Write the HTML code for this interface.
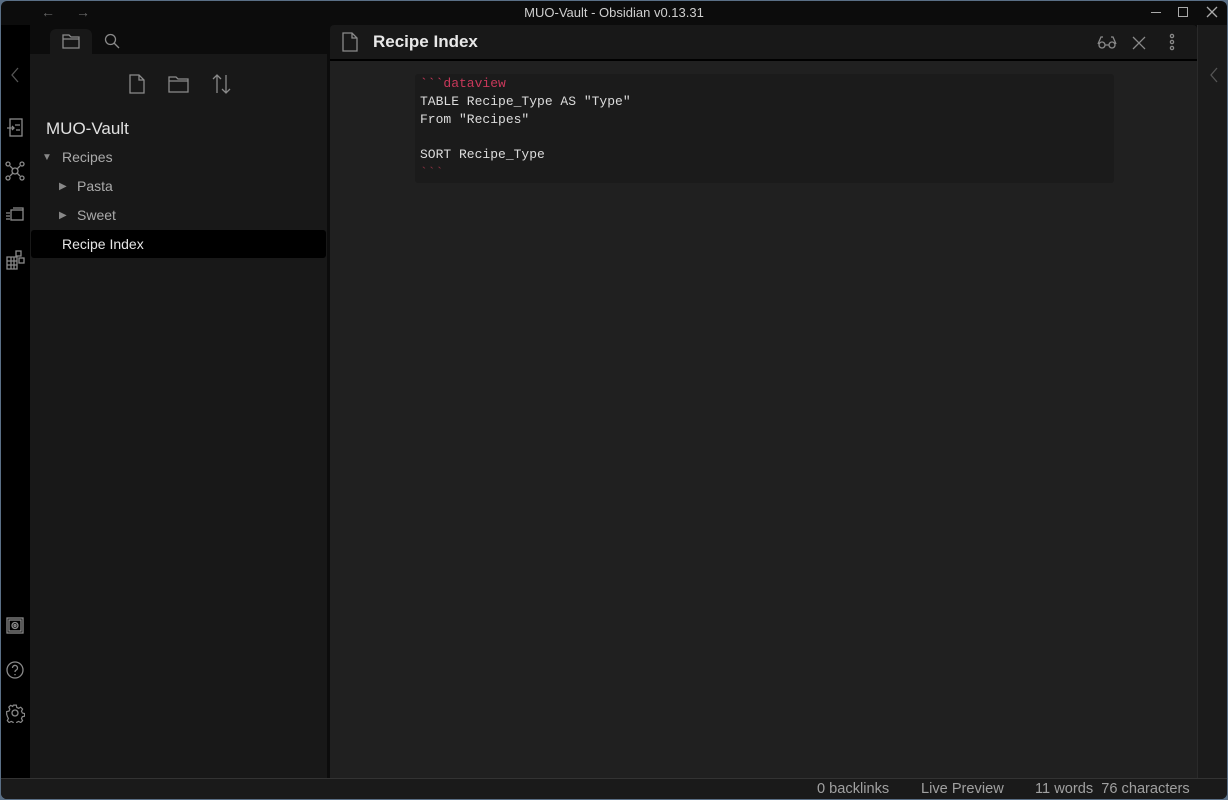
<!DOCTYPE html>
<html><head><meta charset="utf-8"><style>
*{margin:0;padding:0;box-sizing:border-box}
body{width:1228px;height:800px;background:#5a6f86;font-family:"Liberation Sans",sans-serif;overflow:hidden;position:relative}
.win{position:absolute;left:1px;top:1px;right:1px;bottom:1px;background:#0c0c0c;border-radius:6px;overflow:hidden}
.abs{position:absolute}
.title{left:0;right:0;top:0;height:24px;text-align:center;color:#cfcfcf;font-size:13px;line-height:24px}
svg{position:absolute;fill:none;stroke:#8a8a8a;stroke-width:1.3}
.mono{font-family:"Liberation Mono",monospace;font-size:13px;color:#dcdcdc;line-height:17.8px;white-space:pre}
.st{color:#a0a0a0;font-size:14.6px;top:780px}
</style></head><body><div class="win">
<div class="abs title">MUO-Vault - Obsidian v0.13.31</div>
<div class="abs" style="left:40px;top:3px;color:#666;font-size:14px">←</div>
<div class="abs" style="left:75px;top:3px;color:#666;font-size:14px">→</div>
<div class="abs" style="left:1150px;top:11px;width:10px;height:1px;background:#aaa"></div>
<div class="abs" style="left:1177px;top:6px;width:10px;height:10px;border:1px solid #aaa"></div>
<svg style="left:1205px;top:5px" width="12" height="12"><path d="M1 1L11 11M11 1L1 11" stroke="#aaa"/></svg>
<div class="abs" style="left:0;top:24px;width:29px;height:753px;background:#000"></div>
<svg style="left:8px;top:66px" width="12" height="16"><path d="M9 1L3 8L9 15" stroke="#555"/></svg>
<svg style="left:5px;top:117px" width="18" height="20"><rect x="4" y="1" width="12" height="17"/><path d="M1 10h7M6 8l2 2l-2 2M9 7h5M10 12h4"/></svg>
<svg style="left:4px;top:160px" width="20" height="20"><circle cx="10" cy="10" r="3"/><circle cx="3" cy="3" r="2"/><circle cx="17" cy="3" r="2"/><circle cx="3" cy="17" r="2"/><circle cx="17" cy="17" r="2"/><path d="M5 5l3 3M15 5l-3 3M5 15l3-3M15 15l-3-3"/></svg>
<svg style="left:4px;top:205px" width="20" height="18"><rect x="6" y="4" width="12" height="10"/><path d="M8 2h10v2M1 7h4M1 10h4M1 13h4"/></svg>
<svg style="left:4px;top:248px" width="20" height="22"><path d="M2 8h10v12H2zM2 12h10M2 16h10M6 8v12M9 8v12"/><rect x="11" y="2" width="5" height="5"/><rect x="14" y="9" width="5" height="5"/></svg>
<svg style="left:5px;top:616px" width="18" height="18"><rect x="1" y="1" width="16" height="15"/><rect x="3" y="3" width="12" height="11"/><circle cx="9" cy="8.5" r="3"/><circle cx="9" cy="8.5" r="1"/></svg>
<svg style="left:5px;top:660px" width="18" height="18"><circle cx="9" cy="9" r="8"/><path d="M6.5 7a2.5 2.5 0 1 1 3.5 2.2c-.8.4-1 .9-1 1.8M9 13v1.2"/></svg>
<svg style="left:4px;top:702px" width="20" height="20"><circle cx="10" cy="10" r="3"/><path d="M8.5 1.5h3l.5 2.5 2 1 2.3-1.2 2 2-1.2 2.3 1 2 2.4.5v3l-2.4.5-1 2 1.2 2.3-2 2-2.3-1.2-2 1-.5 2.4h-3l-.5-2.4-2-1-2.3 1.2-2-2 1.2-2.3-1-2L1 11.5v-3l2.5-.5 1-2L3.3 3.7l2-2L7.6 2.9l.4-1z" transform="scale(.92) translate(.8 .8)"/></svg>
<div class="abs" style="left:29px;top:53px;width:297px;height:724px;background:#181818"></div>
<div class="abs" style="left:49px;top:28px;width:42px;height:27px;background:#181818;border-radius:6px 6px 0 0"></div>
<svg style="left:61px;top:32px" width="20" height="16"><path d="M1 2h6l2 2h8v11H1zM1 6h16"/></svg>
<svg style="left:103px;top:32px" width="16" height="16"><circle cx="6.5" cy="6.5" r="5"/><path d="M10 10l5 5"/></svg>
<svg style="left:127px;top:73px" width="18" height="20"><path d="M2 1h9l5 5v13H2zM11 1v5h5"/></svg>
<svg style="left:167px;top:74px" width="22" height="18"><path d="M1 2h7l2 2h10v13H1zM1 6h19"/></svg>
<svg style="left:210px;top:73px" width="22" height="20"><path d="M6 19V1M2 5l4-4 4 4M15 1v18M11 15l4 4 4-4"/></svg>
<div class="abs" style="left:45px;top:118px;color:#e0e0e0;font-size:17px">MUO-Vault</div>
<div class="abs" style="left:41px;top:151px;color:#888;font-size:10px">▼</div>
<div class="abs" style="left:61px;top:148px;color:#aaa;font-size:14px">Recipes</div>
<div class="abs" style="left:58px;top:180px;color:#888;font-size:10px">▶</div>
<div class="abs" style="left:76px;top:177px;color:#aaa;font-size:14px">Pasta</div>
<div class="abs" style="left:58px;top:209px;color:#888;font-size:10px">▶</div>
<div class="abs" style="left:76px;top:206px;color:#aaa;font-size:14px">Sweet</div>
<div class="abs" style="left:30px;top:229px;width:295px;height:28px;background:#000;border-radius:3px"></div>
<div class="abs" style="left:61px;top:235px;color:#e6e6e6;font-size:14px">Recipe Index</div>
<div class="abs" style="left:329px;top:24px;width:867px;height:34px;background:#181818;border-radius:4px 4px 0 0"></div>
<div class="abs" style="left:329px;top:58px;width:867px;height:2px;background:#000"></div>
<div class="abs" style="left:329px;top:60px;width:867px;height:717px;background:#202020"></div>
<svg style="left:341px;top:31px" width="16" height="20"><path d="M1 1h9l5 5v13H1zM10 1v5h5"/></svg>
<div class="abs" style="left:372px;top:31px;color:#e8e8e8;font-size:17px;font-weight:bold">Recipe Index</div>
<svg style="left:1096px;top:34px" width="20" height="14"><path d="M1 9l3-7h2M19 9l-3-7h-2"/><circle cx="5" cy="10" r="3"/><circle cx="15" cy="10" r="3"/><path d="M8 10h4"/></svg>
<svg style="left:1131px;top:35px" width="14" height="14"><path d="M1 1l12 12M13 1L1 13"/></svg>
<svg style="left:1167px;top:32px" width="8" height="18"><circle cx="4" cy="3" r="1.6"/><circle cx="4" cy="9" r="1.6"/><circle cx="4" cy="15" r="1.6"/></svg>
<div class="abs" style="left:414px;top:73px;width:699px;height:109px;background:#1b1b1b;border-radius:3px"></div>
<div class="abs mono" style="left:419px;top:74px"><span style="color:#c8385a">&#96;&#96;&#96;dataview</span>
TABLE Recipe_Type AS "Type"
From "Recipes"

SORT Recipe_Type
<span style="color:#8a3040">&#96;&#96;&#96;</span></div>
<div class="abs" style="left:1196px;top:24px;width:30px;height:753px;background:#1b1b1b;border-left:1px solid #2a2a2a"></div>
<svg style="left:1207px;top:66px" width="12" height="16"><path d="M9 1L3 8L9 15" stroke="#555"/></svg>
<div class="abs" style="left:0;top:777px;width:1228px;height:22px;background:#1a1a1a;border-top:1px solid #333"></div>
<div class="abs st" style="left:816px">0 backlinks</div>
<div class="abs st" style="left:920px">Live Preview</div>
<div class="abs st" style="left:1034px">11 words&nbsp;&nbsp;76 characters</div>
</div></body></html>
